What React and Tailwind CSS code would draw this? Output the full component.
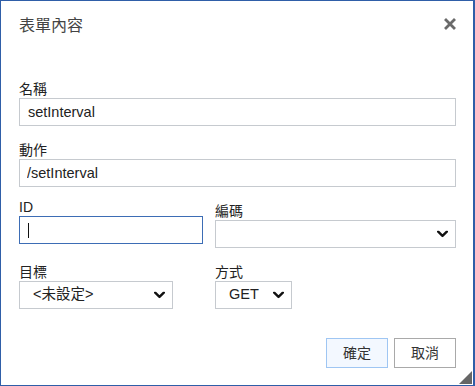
import { useState } from 'react';

const font = "font-['Liberation_Sans','Noto_Sans_CJK_TC',sans-serif]";

const Chevron = () => (
  <svg className="pointer-events-none absolute right-[8px] top-1/2 -translate-y-1/2" width="11" height="7" viewBox="0 0 11 7">
    <path d="M1.2 1.2 L5.5 5.4 L9.8 1.2" fill="none" stroke="#111" strokeWidth="2.4" strokeLinecap="round" strokeLinejoin="round" />
  </svg>
);

const Select = ({ width, value, options, pad = 'pl-[13px]' }) => (
  <div className={`relative ${width}`}>
    <select
      defaultValue={value}
      className={`h-[28px] w-full appearance-none border border-[#c6cacf] bg-white ${pad} pr-6 text-[14.5px] text-[#222] outline-none`}
    >
      {options.map((o) => (
        <option key={o}>{o}</option>
      ))}
    </select>
    <Chevron />
  </div>
);

const Label = ({ children, className = '' }) => (
  <div className={`text-[14px] leading-[17px] text-[#222] ${className}`}>{children}</div>
);

const App = () => {
  const [name, setName] = useState('setInterval');
  const [action, setAction] = useState('/setInterval');

  return (
    <div className={`${font} relative h-[386px] w-[475px] overflow-hidden border border-r-2 border-[#2f5ea8] bg-white`}>
      <div className="flex items-start justify-between pl-[18px] pr-[17px] pt-[13px]">
        <h1 className="text-[16px] leading-[24px] text-[#444]">表單內容</h1>
        <button className="mt-[4px]">
          <svg width="12" height="12" viewBox="0 0 12 12">
            <path d="M2 2 L10 10 M10 2 L2 10" stroke="#6a6a6a" strokeWidth="2.8" strokeLinecap="square" />
          </svg>
        </button>
      </div>

      <div className="flex flex-col pl-[18px] pr-[17px]">
        <Label className="mt-[43px]">名稱</Label>
        <input
          value={name}
          onChange={(e) => setName(e.target.value)}
          className="h-[28px] w-full border border-[#c6cacf] px-[8px] text-[14.5px] text-[#222] outline-none"
        />
        <Label className="mt-[16px]">動作</Label>
        <input
          value={action}
          onChange={(e) => setAction(e.target.value)}
          className="h-[28px] w-full border border-[#c6cacf] px-[7px] text-[14.5px] text-[#222] outline-none"
        />

        <div className="mt-[12px] grid grid-cols-[184px_1fr] gap-x-[12px]">
          <div className="flex flex-col">
            <Label>ID</Label>
            <div className="relative h-[28px] w-full border border-[#3d6db5]">
              <span className="absolute left-[8px] top-[6px] h-[15px] w-px bg-[#111]" />
            </div>
          </div>
          <div className="mt-[4px] flex flex-col">
            <Label>編碼</Label>
            <Select width="w-full" value="" options={['']} />
          </div>
        </div>

        <div className="mt-[16px] grid grid-cols-[154px_1fr] gap-x-[42px]">
          <div className="flex flex-col">
            <Label>目標</Label>
            <Select width="w-full" value="<未設定>" options={['<未設定>']} />
          </div>
          <div className="flex flex-col">
            <Label>方式</Label>
            <Select width="w-[77px]" value="GET" options={['GET', 'POST']} />
          </div>
        </div>

        <div className="mt-[29px] flex justify-end gap-[6px]">
          <button className="h-[30px] w-[62px] border border-[#9fc6f3] bg-[#f3f8ff] text-[14px] text-[#333]">確定</button>
          <button className="h-[30px] w-[62px] border border-[#a9a9a9] bg-white text-[14px] text-[#333]">取消</button>
        </div>
      </div>

      <svg className="absolute bottom-[1px] right-[1px]" width="13" height="13" viewBox="0 0 13 13">
        <path d="M13 0 L13 13 L0 13 Z" fill="#666" />
      </svg>
    </div>
  );
};

export default App;
